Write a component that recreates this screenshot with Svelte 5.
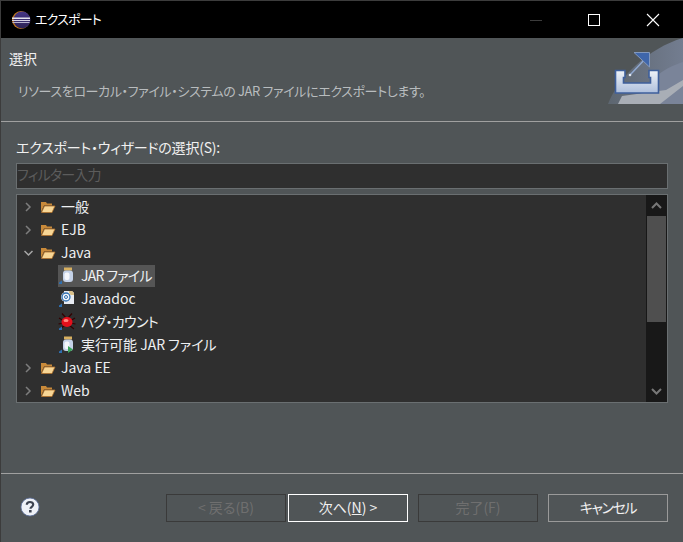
<script>
    let rows = [
        { label: '一般', level: 0, kind: 'folder', arrow: 'right' },
        { label: 'EJB', level: 0, kind: 'folder', arrow: 'right' },
        { label: 'Java', level: 0, kind: 'folder', arrow: 'down' },
        { label: 'JAR ファイル', level: 1, kind: 'jar', selected: true, tight: true },
        { label: 'Javadoc', level: 1, kind: 'doc' },
        { label: 'バグ・カウント', level: 1, kind: 'bug', tight: true },
        { label: '実行可能 JAR ファイル', level: 1, kind: 'runjar' },
        { label: 'Java EE', level: 0, kind: 'folder', arrow: 'right' },
        { label: 'Web', level: 0, kind: 'folder', arrow: 'right' }
    ];
</script>

<div class="window">
    <header class="titlebar">
        <svg class="logo" width="20" height="20" viewBox="0 0 20 20">
            <defs>
                <linearGradient id="ball" x1="0" y1="0" x2="0" y2="1">
                    <stop offset="0" stop-color="#473788" />
                    <stop offset="1" stop-color="#2c2255" />
                </linearGradient>
            </defs>
            <circle cx="10" cy="10" r="9" fill="#c0781e" />
            <circle cx="11" cy="10" r="8.500" fill="url(#ball)" />
            <rect x="1" y="7.500" width="18" height="1.500" fill="#e4e2ee" />
            <rect x="1" y="10" width="18" height="1" fill="#d6d3e4" />
            <rect x="1.500" y="12" width="17" height="1" fill="#b9b5d0" />
        </svg>
        <span class="wintitle">エクスポート</span>
        <div class="controls">
            <svg width="58" height="36" viewBox="0 0 58 36"><path d="M22 18.500h12" stroke="#3c3c3c" /></svg>
            <svg width="58" height="36" viewBox="0 0 58 36"><rect x="22.500" y="12.500" width="11" height="11" fill="none" stroke="#fff" /></svg>
            <svg width="59" height="36" viewBox="0 0 59 36"><path d="M23 12l12 12M35 12L23 24" stroke="#fff" stroke-width="1.100" /></svg>
        </div>
    </header>

    <section class="banner">
        <div class="banner-text">
            <h1>選択</h1>
            <p>リソースをローカル・ファイル・システムの JAR ファイルにエクスポートします。</p>
        </div>
        <svg class="wizard" width="75" height="66" viewBox="0 0 75 66">
            <defs>
                <linearGradient id="tray" x1="0" y1="0" x2="0" y2="1">
                    <stop offset="0" stop-color="#eef2f8" />
                    <stop offset="1" stop-color="#aebfdc" />
                </linearGradient>
                <linearGradient id="swoosh" x1="0" y1="0" x2="1" y2="0">
                    <stop offset="0" stop-color="#5d6670" />
                    <stop offset="1" stop-color="#737d90" />
                </linearGradient>
            </defs>
            <path d="M0 66C10 40 40 10 75 0V66Z" fill="url(#swoosh)" />
            <path d="M28 66C36 44 55 30 75 24V66Z" fill="#7a8499" />
            <path d="M14 58L58 52L75 42V48L52 66H10Z" fill="#a9aeb6" />
            <path d="M7.500 32.500h9.500v7h-1.500v5.500h27v-5.500h-1.500v-7h9.500v22.500h-43z" fill="url(#tray)" stroke="#3e5f9c" stroke-width="1.600" />
            <path d="M22 37L39 19" stroke="#90a8d0" stroke-width="1.500" />
            <circle cx="22" cy="37" r="1.300" fill="#dfe6f2" />
            <path d="M26 14.500H41.500V29Z" fill="#3f66aa" stroke="#8298bd" />
        </svg>
    </section>
    <hr class="first" />

    <div class="content">
        <label for="filter">エクスポート・ウィザードの選択(S):</label>
        <input id="filter" placeholder="フィルター入力" />

        <div class="tree">
            <ul>
                {#each rows as row}
                    <li class:child={row.level === 1}>
                        {#if row.arrow === 'right'}
                            <svg class="arrow" width="9" height="10" viewBox="0 0 9 10"><path d="M2 1l4 4-4 4" fill="none" stroke="#7d7d7d" stroke-width="1.500" /></svg>
                        {:else if row.arrow === 'down'}
                            <svg class="arrow" width="9" height="10" viewBox="0 0 9 10"><path d="M0.500 3l4 4 4-4" fill="none" stroke="#a8a8a8" stroke-width="1.500" /></svg>
                        {/if}
                        <div class="item" class:selected={row.selected}>
                            {#if row.kind === 'folder'}
                                <svg class="icon" width="16" height="16" viewBox="0 0 16 16">
                                    <path d="M1 3h5l1 1.500h5v2H4L1 13Z" fill="#c98a3a" />
                                    <path d="M1.500 13.500L4.500 7H15l-3 6.500Z" fill="#f7d696" stroke="#b0702a" stroke-width="0.800" />
                                </svg>
                            {:else}
                                <svg class="icon" width="18" height="18" viewBox="0 0 18 18">
                                    {#if row.kind === 'jar' || row.kind === 'runjar'}
                                        <rect x="6" y="0.500" width="8" height="3" fill="#d8b060" />
                                        <rect x="5" y="3.500" width="10" height="11.500" rx="3" fill="#c5d2e8" />
                                        <rect x="6.500" y="5.500" width="5" height="7.500" rx="2" fill="#f4f6fb" />
                                    {:else if row.kind === 'doc'}
                                        <path d="M6 1h8l2 2v11H6Z" fill="#e7ebf2" />
                                        <path d="M11 1h3l2 2v2h-5Z" fill="#d9c08a" />
                                        <circle cx="8" cy="7" r="5" fill="#f4f6fb" />
                                        <circle cx="8" cy="7" r="4" fill="none" stroke="#2f6fb0" stroke-width="1.300" />
                                        <circle cx="8" cy="7" r="1.500" fill="none" stroke="#2f6fb0" />
                                    {:else}
                                        <path d="M4 0.500l4 4.500M14 0.500l-4 4.500M1 5l5 3M17 5l-5 3M0.500 11l5-1M17.500 11l-5-1M2 16l5-4M16 16l-5-4" stroke="#300" stroke-width="1.200" />
                                        <ellipse cx="9" cy="9" rx="5.500" ry="5" fill="#e3101c" />
                                        <ellipse cx="8" cy="7.500" rx="2.500" ry="1.500" fill="#ff8a80" />
                                    {/if}
                                    {#if row.kind === 'runjar'}
                                        <path d="M10 10l5 3.500-5 3.500Z" fill="#3aa35a" />
                                    {/if}
                                    <path d="M1 15.500L4 13.500V17H1Z" fill="#2f6fb0" />
                                </svg>
                            {/if}
                            <span class:tight={row.tight}>{row.label}</span>
                        </div>
                    </li>
                {/each}
            </ul>
            <div class="scrollbar">
                <svg width="19" height="21" viewBox="0 0 19 21"><path d="M5 13l4.500-4.500L14 13" fill="none" stroke="#777" stroke-width="2" /></svg>
                <div class="thumb"></div>
                <div class="track"></div>
                <svg width="19" height="21" viewBox="0 0 19 21"><path d="M5 8l4.500 4.500L14 8" fill="none" stroke="#777" stroke-width="2" /></svg>
            </div>
        </div>
    </div>

    <hr class="second" />

    <footer>
        <svg class="help" width="20" height="20" viewBox="0 0 20 20">
            <circle cx="10" cy="10" r="9" fill="#eef1f7" stroke="#5b6f9c" stroke-width="0.800" />
            <path d="M6.800 7.800C6.800 5.800 8.200 5 10 5s3.200 1 3.200 2.600c0 2.200-2.700 2.300-2.700 4.200" fill="none" stroke="#3c4250" stroke-width="2.200" />
            <rect x="9" y="13" width="2.600" height="2.500" fill="#3c4250" />
        </svg>
        <div class="buttons">
            <button class="disabled">&lt; 戻る(B)</button>
            <button class="primary">次へ(<u>N</u>) &gt;</button>
            <button class="disabled spaced">完了(F)</button>
            <button class="cancel spaced">キャンセル</button>
        </div>
    </footer>
</div>

<style>
    :global(body) {
        margin: 0;
        background: #505557;
    }

    .window {
        width: 683px;
        height: 542px;
        box-sizing: border-box;
        border-top: 1px solid #3c3c3c;
        border-left: 1px solid #3c3c3c;
        background: #505557;
        color: #f0f0f0;
        font-family: "Noto Sans CJK JP", "Noto Sans", sans-serif;
        font-size: 14px;
        font-feature-settings: "palt";
        display: flex;
        flex-direction: column;
        overflow: hidden;
    }

    .titlebar {
        height: 37px;
        flex: none;
        background: #000;
        display: flex;
        align-items: center;
        padding-left: 10px;
    }

    .logo {
        margin-right: 4px;
    }

    .wintitle {
        color: #fff;
        font-size: 13px;
        letter-spacing: -0.8px;
        margin-top: -3px;
    }

    .controls {
        margin-left: auto;
        display: flex;
    }

    .banner {
        height: 66px;
        flex: none;
        display: flex;
        justify-content: space-between;
    }

    .banner-text {
        padding-left: 8px;
    }

    h1 {
        margin: 10px 0 0;
        font-size: 14px;
        font-weight: 400;
        line-height: 20px;
        color: #f0f0f0;
    }

    .banner p {
        margin: 13px 0 0 9px;
        font-size: 13px;
        letter-spacing: -0.37px;
        line-height: 20px;
        color: #b8bcbe;
    }

    hr {
        flex: none;
        height: 1px;
        margin: 0;
        border: 0;
        background: #a0a0a0;
    }

    hr.first {
        margin-top: 17px;
    }

    .content {
        flex: none;
        padding: 15px 15px 0;
        display: flex;
        flex-direction: column;
    }

    label {
        font-size: 14px;
        letter-spacing: -0.22px;
        line-height: 20px;
        color: #f0f0f0;
    }

    input {
        height: 26px;
        margin-top: 6px;
        box-sizing: border-box;
        padding: 0 0 5px;
        border: 1px solid #6a6f71;
        background: #2f2f2f;
        color: #f0f0f0;
        font: inherit;
        letter-spacing: -0.8px;
        outline: none;
    }

    input::placeholder {
        color: #5c5c5c;
        opacity: 1;
    }

    .tree {
        margin-top: 5px;
        height: 209px;
        box-sizing: border-box;
        border: 1px solid #6a6f71;
        background: #2f2f2f;
        display: flex;
        overflow: hidden;
    }

    ul {
        flex: 1;
        list-style: none;
        margin: 0;
        padding: 0;
    }

    li {
        height: 23px;
        display: flex;
        align-items: center;
        padding-left: 7px;
    }

    li.child {
        padding-left: 41px;
    }

    .arrow {
        flex: none;
        margin-right: 7px;
    }

    .item {
        display: flex;
        align-items: center;
        height: 22px;
        padding: 0 3px 0 0;
        gap: 5px;
        white-space: nowrap;
        color: #eef0f2;
    }

    .item span {
        margin-top: -2px;
    }

    .item span.tight {
        letter-spacing: -0.7px;
    }

    .item.selected {
        background: #555;
    }

    .icon {
        flex: none;
    }

    .scrollbar {
        width: 21px;
        flex: none;
        background: #181818;
        display: flex;
        flex-direction: column;
        align-items: center;
    }

    .thumb {
        width: 19px;
        height: 106px;
        background: #4f4f4f;
    }

    .track {
        flex: 1;
    }

    .second {
        margin-top: 70px;
    }

    footer {
        flex: 1;
        display: flex;
        padding: 20px 15px 0 19px;
        align-items: flex-start;
        justify-content: space-between;
    }

    .help {
        margin-top: 3px;
    }

    .buttons {
        display: flex;
        gap: 2px;
    }

    button {
        width: 120px;
        height: 28px;
        padding: 0 0 2px;
        background: transparent;
        font: inherit;
        font-size: 14px;
        color: #f0f0f0;
        border: 1px solid #9a9a9a;
    }

    button.spaced {
        margin-left: 8px;
    }

    button.disabled {
        color: #6f6f6f;
        border: 1px solid #3a3a3a;
    }

    button.primary {
        border: 1px solid #fff;
    }

    button.cancel {
        letter-spacing: -1.4px;
    }
</style>
